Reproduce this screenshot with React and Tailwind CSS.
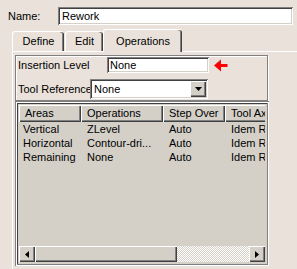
import React from 'react';

const raised = 'bg-[#d4d0c8] shadow-[inset_1px_1px_0_#ffffff,inset_-1px_-1px_0_#404040,inset_-2px_-2px_0_#808080]';
const sunken = 'bg-white shadow-[inset_1px_1px_0_#808080,inset_-1px_-1px_0_#ffffff,inset_2px_2px_0_#404040,inset_-2px_-2px_0_#d4d0c8]';

const columns = [
  { name: 'Areas', w: 'w-[62px]' },
  { name: 'Operations', w: 'w-[82px]' },
  { name: 'Step Over', w: 'w-[62px]' },
  { name: 'Tool Axis', w: 'w-[70px]' },
];

const rows = [
  ['Vertical', 'ZLevel', 'Auto', 'Idem Rework'],
  ['Horizontal', 'Contour-dri...', 'Auto', 'Idem Rework'],
  ['Remaining', 'None', 'Auto', 'Idem Rework'],
];

function Tab({ label, active, className }) {
  return (
    <div
      className={`flex items-center justify-center rounded-t-[3px] border-l border-t border-white shadow-[inset_-1px_0_0_#404040,inset_-2px_0_0_#808080] ${
        active ? 'relative z-10 -mb-px h-[23px] bg-[#eae2da]' : 'h-[20px]'
      } ${className}`}
    >
      {label}
    </div>
  );
}

export default function App() {
  return (
    <div className="w-[297px] h-[269px] overflow-hidden bg-[#eae2da] font-['Liberation_Sans',Arial,sans-serif] text-[11px] leading-[13px] text-black">
      {/* Name */}
      <div className="flex items-center pt-[7px]">
        <span className="w-[58px] pl-[8px]">Name:</span>
        <div className={`${sunken} flex h-[18px] w-[235px] items-center pl-[4px]`}>Rework</div>
      </div>

      {/* Tabs */}
      <div className="mt-[4px] flex h-[22px] items-end pl-[12px]">
        <Tab label="Define" className="w-[52px]" />
        <Tab label="Edit" className="ml-px w-[38px]" />
        <Tab label="Operations" active className="w-[79px]" />
      </div>

      {/* Panel */}
      <div className="ml-[12px] h-[230px] border-l border-t border-white pl-[2px] pt-[3px]">
        {/* Group */}
        <div className="w-[253px] border border-[#808080] pl-px pt-px pb-px shadow-[inset_1px_1px_0_#ffffff,1px_1px_0_#ffffff]">
          <div className="flex h-[16px] items-center">
            <span className="w-[90px] shrink-0 pl-px whitespace-nowrap">Insertion Level</span>
            <div className={`${sunken} flex h-[16px] w-[102px] items-center pl-[3px]`}>None</div>
            <svg className="ml-[5px]" width="14" height="13" viewBox="0 0 14 13">
              <polygon points="0,6.5 7,0.5 7,5 13.5,5 13.5,8 7,8 7,12.5" fill="#ff0000" />
              <polygon points="0,6.5 7,0.5 6,2.5" fill="#a05050" />
            </svg>
          </div>
          <div className="mt-[6px] flex h-[20px] items-center">
            <span className="w-[73px] shrink-0 pl-px whitespace-nowrap">Tool Reference</span>
            <div className={`${sunken} flex h-[20px] w-[118px] shrink-0 items-center p-[2px]`}>
              <span className="flex-1 pl-[2px]">None</span>
              <div className={`${raised} flex h-[16px] w-[16px] items-center justify-center`}>
                <svg width="7" height="4" viewBox="0 0 7 4">
                  <polygon points="0,0 7,0 3.5,4" fill="#000" />
                </svg>
              </div>
            </div>
          </div>
        </div>

        {/* List */}
        <div className="flex h-[165px] w-[254px] flex-col bg-[#d4d0c8] p-[4px] shadow-[inset_1px_1px_0_#808080,inset_-1px_-1px_0_#ffffff,inset_2px_2px_0_#ffffff,inset_-2px_-2px_0_#808080,inset_3px_3px_0_#404040,inset_-3px_-3px_0_#d4d0c8]">
          <div className="flex h-[17px] overflow-hidden">
            {columns.map((c) => (
              <div
                key={c.name}
                className={`${raised} ${c.w} flex shrink-0 items-center pl-[6px] whitespace-nowrap`}
              >
                {c.name}
              </div>
            ))}
          </div>
          {rows.map((r) => (
            <div key={r[0]} className="flex h-[14px] overflow-hidden whitespace-nowrap">
              {r.map((cell, i) => (
                <div key={i} className={`${columns[i].w} shrink-0 ${i === 0 ? 'pl-[4px]' : 'pl-[6px]'} leading-[14px]`}>
                  {cell}
                </div>
              ))}
            </div>
          ))}
          <div className="flex-1" />
          {/* Horizontal scrollbar */}
          <div className="flex h-[16px]">
            <div className={`${raised} flex w-[16px] items-center justify-center`}>
              <svg width="4" height="7" viewBox="0 0 4 7">
                <polygon points="4,0 4,7 0,3.5" fill="#000" />
              </svg>
            </div>
            <div className={`${raised} w-[142px]`} />
            <div className="flex-1 bg-[repeating-conic-gradient(#ffffff_0%_25%,#d4d0c8_0%_50%)] bg-[length:2px_2px]" />
            <div className={`${raised} flex w-[16px] items-center justify-center`}>
              <svg width="4" height="7" viewBox="0 0 4 7">
                <polygon points="0,0 4,3.5 0,7" fill="#000" />
              </svg>
            </div>
          </div>
        </div>
      </div>
    </div>
  );
}
